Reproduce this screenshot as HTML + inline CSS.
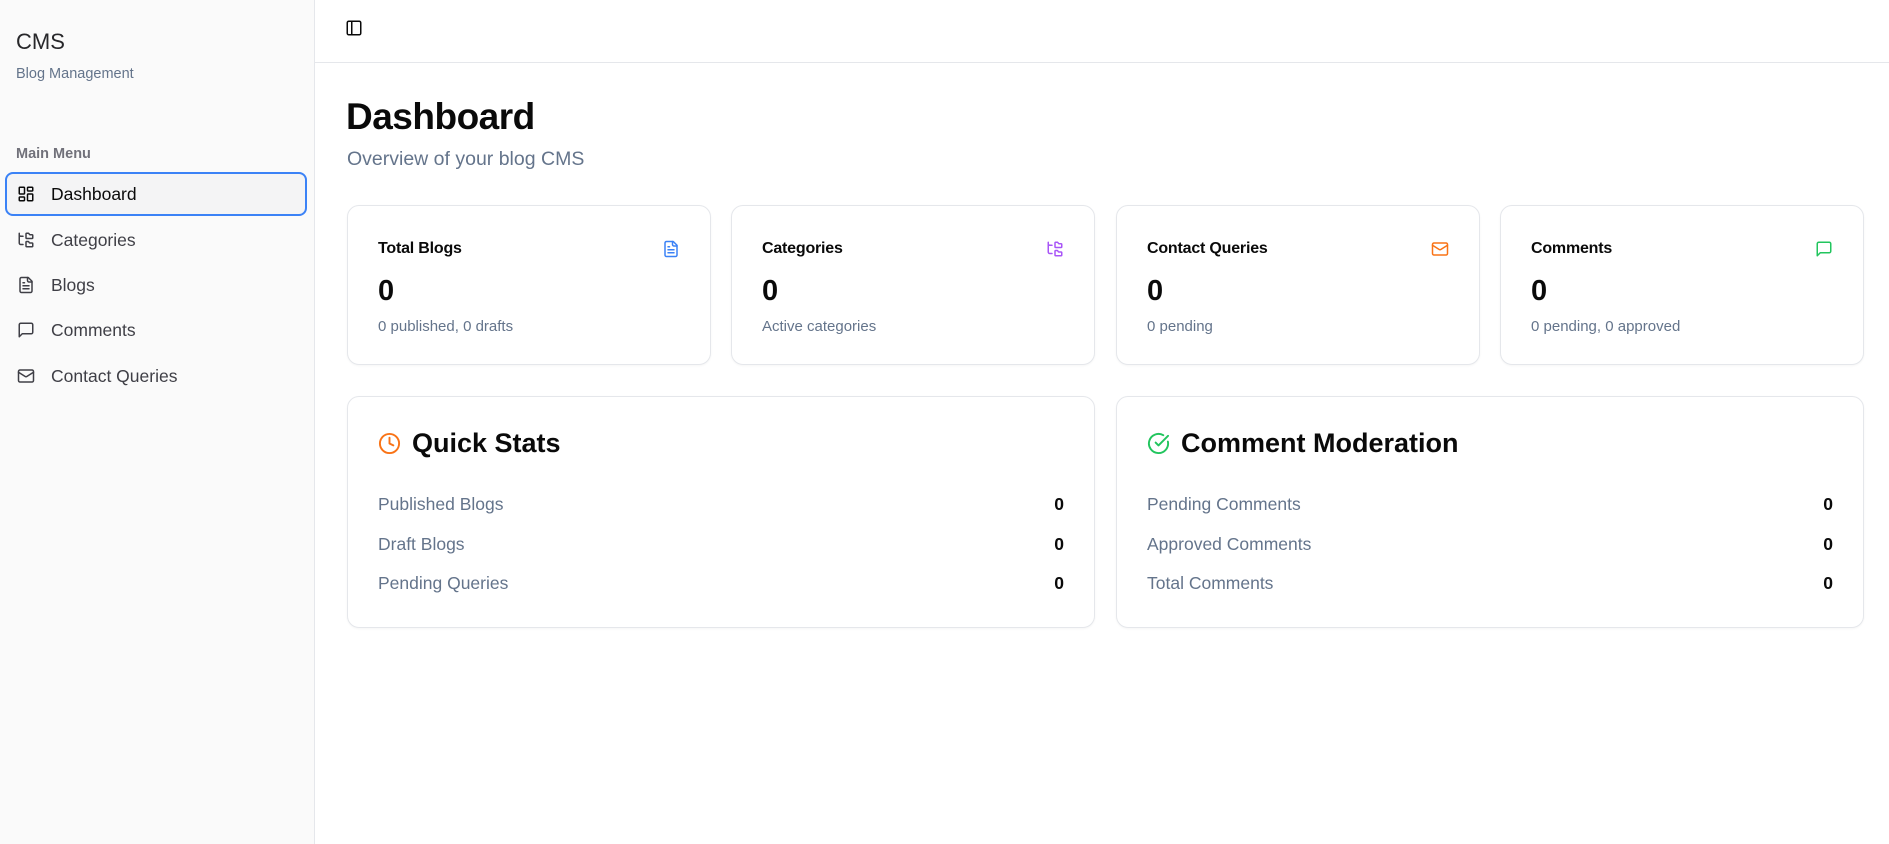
<!DOCTYPE html>
<html><head><meta charset="utf-8"><style>
*{box-sizing:border-box;margin:0;padding:0}
body{width:1889px;height:844px;overflow:hidden;font-family:"Liberation Sans",sans-serif;background:#fff;color:#0a0a0a;position:relative}
.side{position:absolute;left:0;top:0;width:315px;height:844px;background:#fafafa;border-right:1px solid #e5e7eb}
.abs{position:absolute}
svg{fill:none;stroke:currentColor;stroke-width:2;stroke-linecap:round;stroke-linejoin:round}
.mi{position:absolute;left:5px;width:302px;height:44px;display:flex;align-items:center;padding-left:12px;font-size:17.5px;color:#3f3f46}
.mi svg{width:18px;height:18px;margin-right:16px}
.mi.act{border:2px solid #3b82f6;border-radius:8px;background:#f4f4f5;color:#0a0a0a;padding-left:10px}
.card{position:absolute;border:1px solid #e5e7eb;border-radius:12px;background:#fff;box-shadow:0 1px 2px rgba(0,0,0,.04)}
.ct{position:absolute;left:30px;top:34px;font-size:16px;font-weight:bold;letter-spacing:-.2px}
.cn{position:absolute;left:30px;top:69px;font-size:29px;font-weight:bold}
.cs{position:absolute;left:30px;top:112px;font-size:15px;color:#64748b}
.ci{position:absolute;right:30px;top:34px;width:18px;height:18px}
.bt{position:absolute;left:30px;top:31px;font-size:27px;font-weight:bold;display:flex;align-items:center}
.bt svg{width:23px;height:23px;margin-right:11px}
.row{position:absolute;left:30px;right:30px;display:flex;justify-content:space-between;font-size:17.5px;color:#64748b}
.row b{color:#0a0a0a;font-weight:bold}
</style></head><body>
<div class="side">
 <div class="abs" style="left:16px;top:29px;font-size:22px;color:#27272a">CMS</div>
 <div class="abs" style="left:16px;top:66px;font-size:14.5px;color:#64748b">Blog Management</div>
 <div class="abs" style="left:16px;top:146px;font-size:14.5px;color:#71717a;font-weight:bold">Main Menu</div>
 <div class="mi act" style="top:172px"><svg viewBox="0 0 24 24"><rect x="3" y="3" width="7" height="9" rx="1"/><rect x="14" y="3" width="7" height="5" rx="1"/><rect x="14" y="12" width="7" height="9" rx="1"/><rect x="3" y="16" width="7" height="5" rx="1"/></svg>Dashboard</div>
 <div class="mi" style="top:218px"><svg viewBox="0 0 24 24"><path d="M20 10a1 1 0 0 0 1-1V6a1 1 0 0 0-1-1h-2.5a1 1 0 0 1-.8-.4l-.9-1.2A1 1 0 0 0 15 3h-2a1 1 0 0 0-1 1v5a1 1 0 0 0 1 1Z"/><path d="M20 21a1 1 0 0 0 1-1v-3a1 1 0 0 0-1-1h-2.9a1 1 0 0 1-.88-.55l-.42-.85a1 1 0 0 0-.92-.6H13a1 1 0 0 0-1 1v5a1 1 0 0 0 1 1Z"/><path d="M3 5a2 2 0 0 0 2 2h3"/><path d="M3 3v13a2 2 0 0 0 2 2h3"/></svg>Categories</div>
 <div class="mi" style="top:263px"><svg viewBox="0 0 24 24"><path d="M15 2H6a2 2 0 0 0-2 2v16a2 2 0 0 0 2 2h12a2 2 0 0 0 2-2V7Z"/><path d="M14 2v4a2 2 0 0 0 2 2h4"/><path d="M10 9H8M16 13H8M16 17H8"/></svg>Blogs</div>
 <div class="mi" style="top:308px"><svg viewBox="0 0 24 24"><path d="M21 15a2 2 0 0 1-2 2H7l-4 4V5a2 2 0 0 1 2-2h14a2 2 0 0 1 2 2z"/></svg>Comments</div>
 <div class="mi" style="top:354px"><svg viewBox="0 0 24 24"><rect x="2" y="4" width="20" height="16" rx="2"/><path d="m22 7-8.97 5.7a1.94 1.94 0 0 1-2.06 0L2 7"/></svg>Contact Queries</div>
</div>
<div class="abs" style="left:315px;top:62px;width:1574px;height:1px;background:#e5e7eb"></div>
<svg class="abs" style="left:345px;top:19px;width:18px;height:18px;color:#0a0a0a" viewBox="0 0 24 24"><rect x="3" y="3" width="18" height="18" rx="2"/><path d="M9 3v18"/></svg>
<div class="abs" style="left:346px;top:96px;font-size:37px;font-weight:bold;letter-spacing:-.5px">Dashboard</div>
<div class="abs" style="left:347px;top:148px;font-size:19.5px;color:#64748b">Overview of your blog CMS</div>

<div class="card" style="left:347px;top:205px;width:364px;height:160px"><div class="ct">Total Blogs</div><svg class="ci" style="color:#3b82f6" viewBox="0 0 24 24"><path d="M15 2H6a2 2 0 0 0-2 2v16a2 2 0 0 0 2 2h12a2 2 0 0 0 2-2V7Z"/><path d="M14 2v4a2 2 0 0 0 2 2h4"/><path d="M10 9H8M16 13H8M16 17H8"/></svg><div class="cn">0</div><div class="cs">0 published, 0 drafts</div></div>
<div class="card" style="left:731px;top:205px;width:364px;height:160px"><div class="ct">Categories</div><svg class="ci" style="color:#a855f7" viewBox="0 0 24 24"><path d="M20 10a1 1 0 0 0 1-1V6a1 1 0 0 0-1-1h-2.5a1 1 0 0 1-.8-.4l-.9-1.2A1 1 0 0 0 15 3h-2a1 1 0 0 0-1 1v5a1 1 0 0 0 1 1Z"/><path d="M20 21a1 1 0 0 0 1-1v-3a1 1 0 0 0-1-1h-2.9a1 1 0 0 1-.88-.55l-.42-.85a1 1 0 0 0-.92-.6H13a1 1 0 0 0-1 1v5a1 1 0 0 0 1 1Z"/><path d="M3 5a2 2 0 0 0 2 2h3"/><path d="M3 3v13a2 2 0 0 0 2 2h3"/></svg><div class="cn">0</div><div class="cs">Active categories</div></div>
<div class="card" style="left:1116px;top:205px;width:364px;height:160px"><div class="ct">Contact Queries</div><svg class="ci" style="color:#f97316" viewBox="0 0 24 24"><rect x="2" y="4" width="20" height="16" rx="2"/><path d="m22 7-8.97 5.7a1.94 1.94 0 0 1-2.06 0L2 7"/></svg><div class="cn">0</div><div class="cs">0 pending</div></div>
<div class="card" style="left:1500px;top:205px;width:364px;height:160px"><div class="ct">Comments</div><svg class="ci" style="color:#22c55e" viewBox="0 0 24 24"><path d="M21 15a2 2 0 0 1-2 2H7l-4 4V5a2 2 0 0 1 2-2h14a2 2 0 0 1 2 2z"/></svg><div class="cn">0</div><div class="cs">0 pending, 0 approved</div></div>

<div class="card" style="left:347px;top:396px;width:748px;height:232px">
 <div class="bt"><svg style="color:#f97316" viewBox="0 0 24 24"><circle cx="12" cy="12" r="10"/><path d="M12 6v6l4 2"/></svg>Quick Stats</div>
 <div class="row" style="top:97px"><span>Published Blogs</span><b>0</b></div>
 <div class="row" style="top:137px"><span>Draft Blogs</span><b>0</b></div>
 <div class="row" style="top:176px"><span>Pending Queries</span><b>0</b></div>
</div>
<div class="card" style="left:1116px;top:396px;width:748px;height:232px">
 <div class="bt"><svg style="color:#22c55e" viewBox="0 0 24 24"><path d="M21.8 10A10 10 0 1 1 17 3.34"/><path d="m9 11 3 3L22 4"/></svg>Comment Moderation</div>
 <div class="row" style="top:97px"><span>Pending Comments</span><b>0</b></div>
 <div class="row" style="top:137px"><span>Approved Comments</span><b>0</b></div>
 <div class="row" style="top:176px"><span>Total Comments</span><b>0</b></div>
</div>
</body></html>
